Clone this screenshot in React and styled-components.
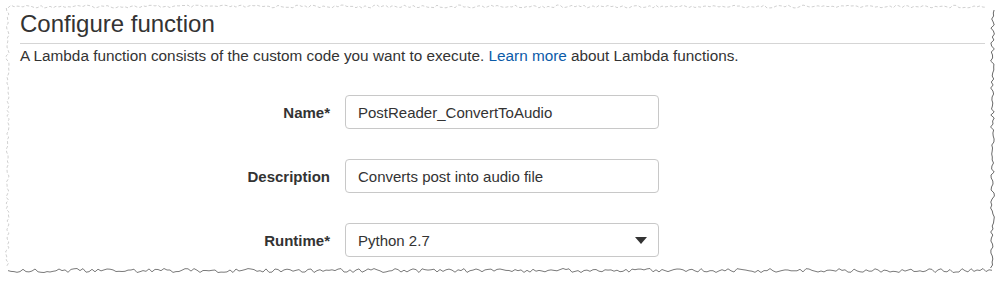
import React from 'react';
import styled, { createGlobalStyle } from 'styled-components';

const GlobalStyle = createGlobalStyle`
  html, body {
    margin: 0;
    padding: 0;
    background: #fff;
  }
  body {
    font-family: "Liberation Sans", Arial, sans-serif;
    color: #333;
  }
`;

// deterministic jitter so the torn edge looks the same every run
const rand = (seed) => {
  const x = Math.sin(seed * 12.9898) * 43758.5453;
  return x - Math.floor(x);
};

const edge = (from, to, fixed, amp, horizontal, seed) => {
  const pts = [];
  let i = 0;
  for (let p = from; p <= to; p += 3) {
    const off = fixed + (rand(seed + i) - 0.5) * amp;
    pts.push(horizontal ? `${p},${off.toFixed(1)}` : `${off.toFixed(1)},${p}`);
    i++;
  }
  return pts.join(' ');
};

const TornEdge = () => (
  <EdgeSvg width="1000" height="282" viewBox="0 0 1000 282">
    <polyline points={edge(8, 988, 6.5, 3, true, 1)} fill="none" stroke="#c4c4c4" strokeWidth="0.8" strokeDasharray="3 2" />
    <polyline points={edge(8, 268, 7.5, 3.5, false, 300)} fill="none" stroke="#c4c4c4" strokeWidth="0.8" strokeDasharray="3 2" />
    <polyline points={edge(10, 270, 992.5, 4, false, 700)} fill="none" stroke="#6a6a6a" strokeWidth="1" />
    <polyline points={edge(8, 992, 270.5, 4, true, 1100)} fill="none" stroke="#7a7a7a" strokeWidth="1" />
  </EdgeSvg>
);

const fields = [
  { label: 'Name*', value: 'PostReader_ConvertToAudio' },
  { label: 'Description', value: 'Converts post into audio file' },
  { label: 'Runtime*', value: 'Python 2.7', select: true },
];

export default function App() {
  return (
    <>
      <GlobalStyle />
      <Frame>
        <Header>
          <Title>Configure function</Title>
        </Header>
        <Intro>
          A Lambda function consists of the custom code you want to execute.{' '}
          <Link href="#">Learn more</Link> about Lambda functions.
        </Intro>
        <Form>
          {fields.map((f) => (
            <React.Fragment key={f.label}>
              <Label>{f.label}</Label>
              <Field>
                {f.value}
                {f.select && (
                  <Caret width="12" height="7" viewBox="0 0 12 7">
                    <path d="M0 0 L12 0 L6 7 Z" fill="#333" />
                  </Caret>
                )}
              </Field>
            </React.Fragment>
          ))}
        </Form>
        <TornEdge />
      </Frame>
    </>
  );
}

const Frame = styled.div`
  position: relative;
  width: 1000px;
  height: 282px;
  overflow: hidden;
  background: #fff;
  box-sizing: border-box;
  padding: 10px 15px 0 20px;
`;

const EdgeSvg = styled.svg`
  position: absolute;
  left: 0;
  top: 0;
  pointer-events: none;
`;

const Header = styled.div`
  border-bottom: 1px solid #d5d5d5;
  padding-bottom: 5px;
`;

const Title = styled.h1`
  margin: 0;
  font-size: 24px;
  line-height: 28px;
  font-weight: 400;
  color: #333;
`;

const Intro = styled.p`
  margin: 2px 0 0;
  font-size: 15.3px;
  line-height: 20px;
  color: #333;
`;

const Link = styled.a`
  color: #0b5ba8;
  text-decoration: none;
`;

const Form = styled.div`
  display: grid;
  grid-template-columns: 310px 314px;
  column-gap: 15px;
  row-gap: 30px;
  align-items: center;
  margin-top: 29px;
`;

const Label = styled.div`
  text-align: right;
  font-weight: 700;
  font-size: 15px;
  color: #333;
`;

const Field = styled.div`
  box-sizing: border-box;
  height: 34px;
  display: flex;
  align-items: center;
  justify-content: space-between;
  padding: 0 11px 0 12px;
  border: 1px solid #c8c8c8;
  border-radius: 4px;
  font-size: 15px;
  color: #333;
  background: #fff;
`;

const Caret = styled.svg`
  display: block;
`;
